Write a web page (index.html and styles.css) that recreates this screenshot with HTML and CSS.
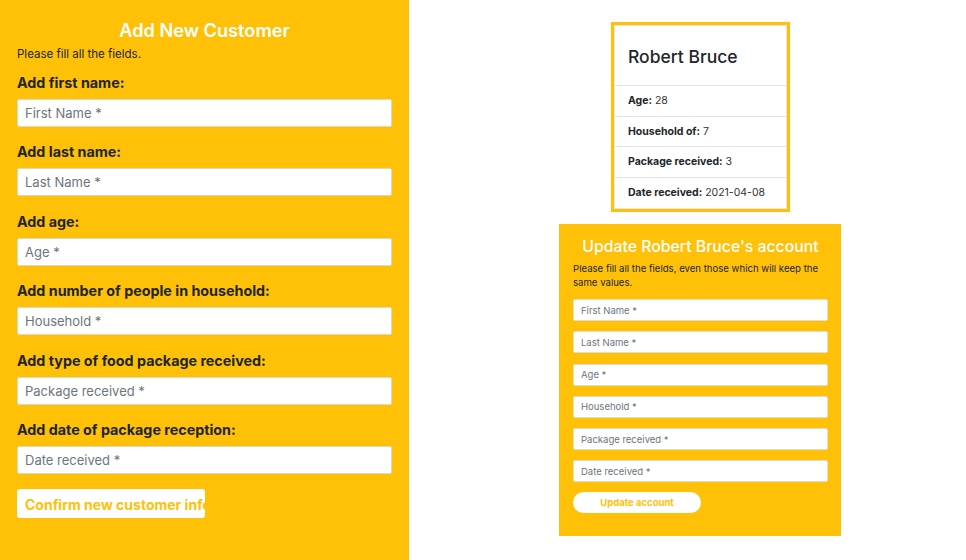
FILE: index.html
```html
<!DOCTYPE html>
<html>
<head>
<meta charset="utf-8">
<link rel="stylesheet" href="styles.css">
</head>
<body>
<div class="page">
  <section class="add-panel">
    <h2 class="add-title">Add New Customer</h2>
    <p class="add-note">Please fill all the fields.</p>
    <div class="group">
      <label class="lbl">Add first name:</label>
      <input class="field" placeholder="First Name *">
    </div>
    <div class="group">
      <label class="lbl">Add last name:</label>
      <input class="field" placeholder="Last Name *">
    </div>
    <div class="group">
      <label class="lbl">Add age:</label>
      <input class="field" placeholder="Age *">
    </div>
    <div class="group">
      <label class="lbl">Add number of people in household:</label>
      <input class="field" placeholder="Household *">
    </div>
    <div class="group">
      <label class="lbl">Add type of food package received:</label>
      <input class="field" placeholder="Package received *">
    </div>
    <div class="group">
      <label class="lbl">Add date of package reception:</label>
      <input class="field" placeholder="Date received *">
    </div>
    <button class="confirm-btn"><span>Confirm new customer info</span></button>
  </section>

  <section class="right">
    <div class="card">
      <div class="card-inner">
        <div class="card-head">Robert Bruce</div>
        <div class="card-row"><b>Age:</b> 28</div>
        <div class="card-row"><b>Household of:</b> 7</div>
        <div class="card-row"><b>Package received:</b> 3</div>
        <div class="card-row last"><b>Date received:</b> 2021-04-08</div>
      </div>
    </div>

    <div class="update">
      <h3 class="upd-title">Update Robert Bruce's account</h3>
      <p class="upd-note">Please fill all the fields, even those which will keep the same values.</p>
      <input class="ufield" placeholder="First Name *">
      <input class="ufield" placeholder="Last Name *">
      <input class="ufield" placeholder="Age *">
      <input class="ufield" placeholder="Household *">
      <input class="ufield" placeholder="Package received *">
      <input class="ufield" placeholder="Date received *">
      <button class="upd-btn">Update account</button>
    </div>
  </section>
</div>
</body>
</html>
```

FILE: styles.css
```css
* { box-sizing: border-box; }
html, body { margin: 0; padding: 0; background: #fff; }
body {
  font-family: Inter, "Noto Sans", "Liberation Sans", sans-serif;
  color: #212529;
}
.page {
  display: flex;
  width: 966px;
  height: 560px;
  overflow: hidden;
}

/* Left panel */
.add-panel {
  width: 409px;
  height: 560px;
  background: #FFC107;
  padding: 18px 17px 0 17px;
  flex-shrink: 0;
}
.add-title {
  margin: 0;
  text-align: center;
  color: #fff;
  font-size: 18.2px;
  font-weight: 600;
  line-height: 24px;
}
.add-note {
  margin: 5px 0 0 0;
  font-size: 11.5px;
  line-height: 14px;
}
.group {
  margin-top: 13px;
}
.group + .group { margin-top: 16.4px; }
.lbl {
  display: block;
  font-size: 14.3px;
  font-weight: 700;
  line-height: 18px;
}
.field {
  display: block;
  margin-top: 7px;
  width: 375px;
  height: 28px;
  border: 1px solid #dcd6c4;
  border-radius: 2px;
  background: #fff;
  padding: 0 7px;
  font-family: inherit;
  font-size: 13px;
  color: #495057;
  outline: none;
}
.field::placeholder { color: #6c757d; }
.confirm-btn {
  display: block;
  margin-top: 15px;
  width: 188px;
  height: 29px;
  background: #fff;
  border: none;
  border-radius: 3px;
  padding: 2px 0 0 8px;
  overflow: hidden;
  white-space: nowrap;
  text-align: left;
  font-family: inherit;
  font-size: 14px;
  font-weight: 700;
  color: #FFC107;
}

/* Right side */
.right {
  display: flex;
  flex-direction: column;
  padding-left: 150px;
}
.card {
  margin: 22px 0 0 52px;
  width: 179px;
  border: 3px solid #FFC107;
  background: #fff;
}
.card-inner {
  border: 1px solid #e6e6e6;
}
.card-head {
  height: 60px;
  padding: 0 13px;
  display: flex;
  align-items: center;
  font-size: 17.5px;
  font-weight: 500;
  border-bottom: 1px solid #e3e3e3;
  padding-top: 1px;
}
.card-row {
  height: 30.5px;
  padding: 0 13px;
  display: flex;
  align-items: center;
  font-size: 10.5px;
  color: #333;
  border-bottom: 1px solid #e3e3e3;
  white-space: pre;
}
.card-row b { font-weight: 700; color: #212529; }
.card-row.last { border-bottom: none; }

.update {
  margin-top: 12px;
  width: 282px;
  height: 312px;
  background: #FFC107;
  padding: 12px 13px 0 14px;
  display: flex;
  flex-direction: column;
}
.upd-title {
  margin: 0;
  text-align: center;
  color: #fff;
  font-size: 15.8px;
  font-weight: 500;
  line-height: 22px;
}
.upd-note {
  margin: 4px 0 0 0;
  font-size: 9.6px;
  line-height: 14px;
}
.ufield {
  display: block;
  width: 255px;
  height: 22px;
  margin-top: 10.3px;
  border: 1px solid #e2dccb;
  border-radius: 2px;
  background: #fff;
  padding: 0 7px;
  font-family: inherit;
  font-size: 9.5px;
  outline: none;
}
.ufield:first-of-type { margin-top: 9px; }
.ufield::placeholder { color: #6c757d; }
.upd-btn {
  margin-top: 10px;
  width: 128px;
  height: 21px;
  background: #fff;
  border: none;
  border-radius: 11px;
  font-family: inherit;
  font-size: 9.5px;
  font-weight: 700;
  color: #FFC107;
  padding: 0;
}
```
